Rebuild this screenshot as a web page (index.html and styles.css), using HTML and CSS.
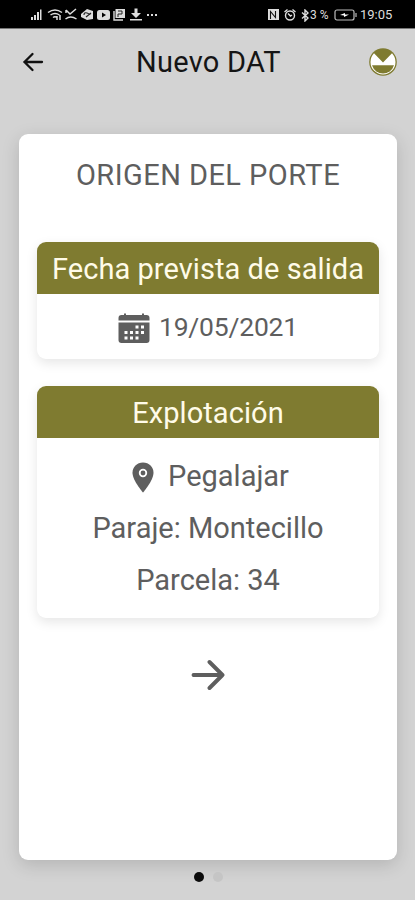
FILE: index.html
```html
<!DOCTYPE html>
<html lang="es">
<head>
<meta charset="utf-8">
<title>Nuevo DAT</title>
<link rel="stylesheet" href="styles.css">
</head>
<body>
<div class="status">
  <svg class="status-left" width="130" height="16" viewBox="0 0 130 16" fill="#ddd">
    <path d="M0 10h2v3H0zM3 8h2v5H3zM6 5h2v8H6zM9 2.500h1.500v10.500H9z"/>
    <g fill="none" stroke="#ddd" stroke-width="1.500"><path d="M17 5.500q7-5 14 0M19.500 8q4.500-3 9 0M22 10.500q2-1.500 4 0M26 9v4M29 8v5"/><path d="M35 3l4 4 6-5M35 3v3M34.500 12q5-4 11 0"/></g>
    <path d="M50 7l6-5 6 2v8l-6 1-6-3z"/><path d="M53 8q0-3 3-2t3 2M55 10l5-4" fill="none" stroke="#222" stroke-width="1.200"/>
    <rect x="66" y="3" width="13" height="10" rx="2.500"/><path d="M71 5.500v5l4-2.500z" fill="#000"/>
    <path d="M84.500 2H94v9h-9.500z"/><path d="M83 4v9h9" fill="none" stroke="#ddd" stroke-width="1.400"/><path d="M87 4h4v3h-4v3" fill="none" stroke="#222"/>
    <path d="M103.500 1.500h3V6h3.500l-5 5-5-5h3.500zM99 12h12v1.500H99z"/>
    <path d="M116 7h2v2h-2zM120 7h2v2h-2zM124 7h2v2h-2z"/>
  </svg>
  <div class="status-right">
    <svg width="33" height="14" viewBox="0 0 33 14" fill="none" stroke="#ddd" stroke-width="1.400">
      <path d="M0 1h11v11H0z" fill="#ddd" stroke="none"/><path d="M2.500 11V3.500l5 6V3" stroke="#111" stroke-width="1.100"/>
      <circle cx="22" cy="7.500" r="4.500"/><path d="M16.500 4l3-2.500M27.500 4l-3-2.500M20 5.500l2.500 2.500 1.500-1"/>
    </svg>
    <svg class="bt" width="8" height="13" viewBox="0 0 8 13" fill="none" stroke="#ddd" stroke-width="1.400"><path d="M1 3.500l6 5.500-3 3V1l3 3-6 5.500"/></svg>
    <span class="pct">3 %</span>
    <svg class="battery" width="23" height="12" viewBox="0 0 23 12" fill="none" stroke="#bbb" stroke-width="1.200"><rect x="1" y="1" width="19" height="10" rx="2"/><path d="M22 4v4"/><path d="M6 6l5-2v1.500h4L10 8V6.500z" fill="#fff" stroke="none"/></svg>
    <span class="clock">19:05</span>
  </div>
</div>
<header class="bar">
  <svg class="back" width="22" height="20" viewBox="0 0 22 20" fill="none" stroke="#111" stroke-width="2.300" stroke-linecap="round"><path d="M20 10H2.500M10.500 2L2.500 10l8 8"/></svg>
  <h1>Nuevo DAT</h1>
  <svg class="logo" width="28" height="28" viewBox="0 0 28 28"><circle cx="14" cy="14" r="13.800" fill="#7f7b30"/><path d="M5 5.300l9 9.200 9-9.200a12.500 12.500 0 1 1-18 0z" fill="#fff"/><path d="M3 17.300h22a11.500 11.500 0 0 1-22 0z" fill="#7f7b30"/></svg>
</header>
<main class="panel">
  <h2>ORIGEN DEL PORTE</h2>
  <section class="card">
    <h3>Fecha prevista de salida</h3>
    <div class="date">
      <svg width="32" height="31" viewBox="0 0 32 31" fill="#5e5e5e"><path d="M0.500 7.500V5q0-3 3-3H6V.5h2V2h16V.5h2V2h2.500q3 0 3 3v2.500z"/><path d="M.5 9.500h31V27q0 3-3 3h-25q-3 0-3-3z"/><path d="M17.500 12.500h3v3h-3zM23 12.500h3v3h-3zM6.500 18h3v3h-3zM12 18h3v3h-3zM17.500 18h3v3h-3zM23 18h3v3h-3zM6.500 23.500h3v3h-3zM12 23.500h3v3h-3zM17.500 23.500h3v3h-3z" fill="#fff"/></svg>
      <span>19/05/2021</span>
    </div>
  </section>
  <section class="card farm">
    <h3>Explotación</h3>
    <div class="lines">
      <p class="place"><svg width="22" height="31" viewBox="0 0 22 31"><path d="M11 .5C5 .5.500 5 .500 10.700.500 18.500 11 30.500 11 30.500S21.500 18.500 21.500 10.700C21.500 5 17 .5 11 .5z" fill="#5e5e5e"/><circle cx="11" cy="11" r="3.300" fill="none" stroke="#fff" stroke-width="1.800"/></svg><span>Pegalajar</span></p>
      <p>Paraje: Montecillo</p>
      <p>Parcela: 34</p>
    </div>
  </section>
  <svg class="next" width="34" height="32" viewBox="0 0 34 32" fill="none" stroke="#5e5e5e" stroke-width="3.900" stroke-linecap="round" stroke-linejoin="round"><path d="M2.500 16h29M18.500 3L31.500 16 18.500 29"/></svg>
</main>
<div class="dots"><i class="on"></i><i></i></div>
</body>
</html>
```
FILE: styles.css
```css
* { box-sizing: border-box; }
body { margin: 0; width: 415px; height: 900px; overflow: hidden; background: #d3d3d3; font-family: Roboto, sans-serif; color: #5e5e5e; display: flex; flex-direction: column; }
h1, h2, h3, p { margin: 0; font-weight: 400; text-align: center; white-space: nowrap; }
svg { display: block; flex: none; }
.status { height: 29px; background: #000; border-bottom: 1px solid #777; display: flex; justify-content: space-between; padding: 7px 22px 0 31px; color: #ddd; }
.status-right { display: flex; height: 16px; align-items: center; font-size: 12px; line-height: 16px; }
.pct { width: 22px; margin-left: 1px; white-space: nowrap; }
.battery { margin: 0 3px 0 2px; }
.clock { width: 33px; font-size: 13px; }
.bar { height: 66px; display: flex; align-items: center; justify-content: space-between; padding: 0 18px 0 22px; }
h1 { font-size: 29px; line-height: 34px; color: #151515; letter-spacing: .25px; margin-left: 4px; }
.panel { width: 378px; height: 726px; margin: 39px 0 0 19px; padding: 0 18px; background: #fff; border-radius: 9px; box-shadow: 0 5px 18px rgba(0,0,0,.15); }
h2 { font-size: 29px; line-height: 34px; letter-spacing: .45px; padding-top: 24px; height: 108px; }
.card { height: 117px; border-radius: 9px; background: #fff; box-shadow: 0 4px 12px rgba(0,0,0,.1); overflow: hidden; }
h3 { height: 52px; background: #7f7b30; color: #fffbe8; font-size: 29px; line-height: 54px; letter-spacing: .06px; }
.date { height: 65px; padding-top: 3px; display: flex; align-items: center; justify-content: center; gap: 9px; font-size: 26.5px; letter-spacing: -.2px; }
.date span { padding-bottom: 3px; }
.farm { height: 232px; margin-top: 27px; }
.lines { padding-top: 12px; font-size: 29px; }
.lines p { height: 52px; line-height: 53px; }
.lines .place { display: flex; justify-content: center; align-items: center; gap: 14px; padding-left: 5px; }
.place svg { margin-top: 2px; }
.next { margin: 41px auto 0; }
.dots { display: flex; justify-content: center; gap: 9px; margin: 12px 0 0 1px; }
.dots i { width: 10px; height: 10px; border-radius: 50%; background: #c5c5c5; }
.dots .on { background: #0b0b0b; }
```
